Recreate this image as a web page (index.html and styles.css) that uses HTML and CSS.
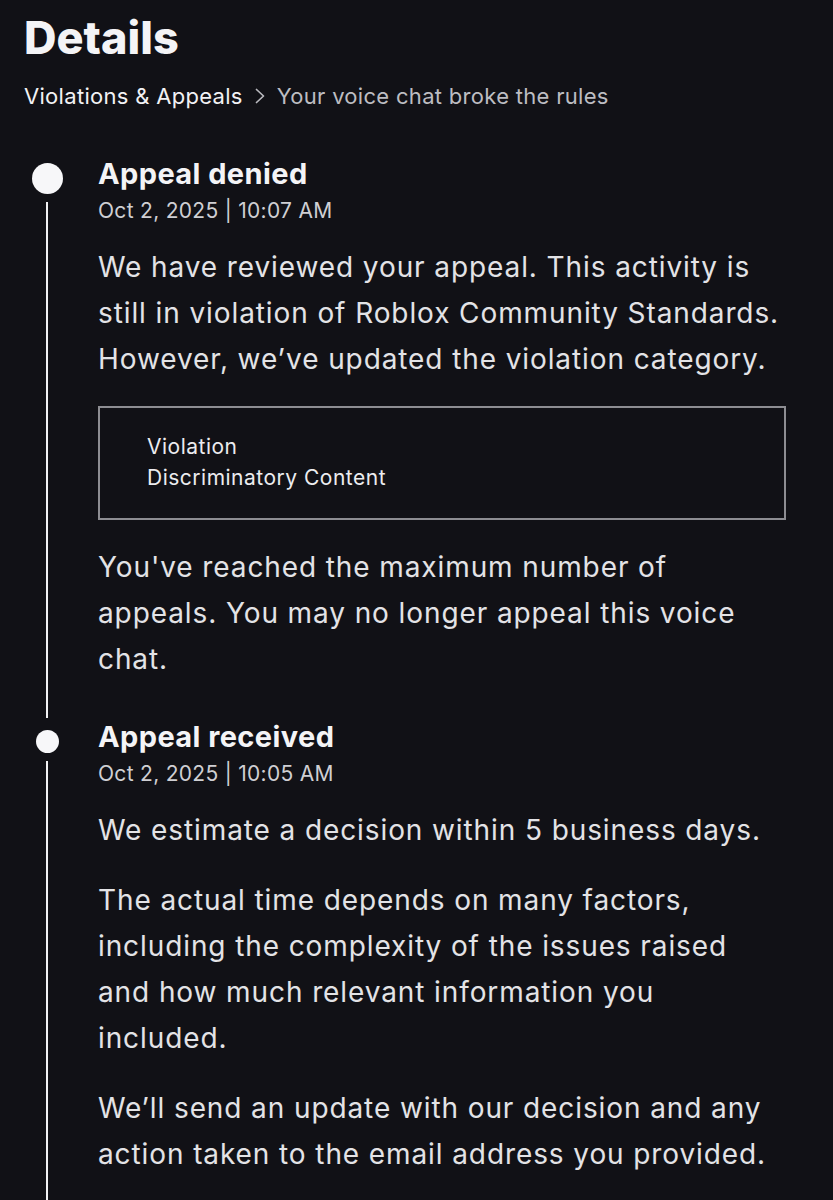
FILE: index.html
```html
<!DOCTYPE html>
<html lang="en">
<head>
<meta charset="utf-8">
<title>Details</title>
<link rel="stylesheet" href="styles.css">
</head>
<body>
<main class="page">
  <header class="header">
    <h1 class="title">Details</h1>
    <nav class="crumbs">
      <span class="crumb-link">Violations &amp; Appeals</span>
      <svg class="chev" width="14" height="18" viewBox="0 0 14 18" aria-hidden="true"><path d="M3.5 2.5 L10.5 9 L3.5 15.5" fill="none" stroke="#b9b9be" stroke-width="1.7" stroke-linecap="round" stroke-linejoin="round"/></svg>
      <span class="crumb-current">Your voice chat broke the rules</span>
    </nav>
  </header>

  <section class="timeline">
    <article class="event event-first">
      <div class="rail">
        <span class="dot dot-big"></span>
        <span class="line line-first"></span>
      </div>
      <div class="content">
        <h2 class="event-title">Appeal denied</h2>
        <div class="event-date">Oct 2, 2025 | 10:07 AM</div>
        <p class="body">We have reviewed your appeal. This activity is still in violation of Roblox Community Standards. However, we’ve updated the violation category.</p>
        <div class="box">
          <div class="box-label">Violation</div>
          <div class="box-value">Discriminatory Content</div>
        </div>
        <p class="body">You've reached the maximum number of appeals. You may no longer appeal this voice chat.</p>
      </div>
    </article>

    <article class="event event-second">
      <div class="rail">
        <span class="dot dot-small"></span>
        <span class="line line-second"></span>
      </div>
      <div class="content">
        <h2 class="event-title">Appeal received</h2>
        <div class="event-date">Oct 2, 2025 | 10:05 AM</div>
        <p class="body">We estimate a decision within 5 business days.</p>
        <p class="body">The actual time depends on many factors, including the complexity of the issues raised and how much relevant information you included.</p>
        <p class="body">We’ll send an update with our decision and any action taken to the email address you provided.</p>
      </div>
    </article>
  </section>
</main>
</body>
</html>
```

FILE: styles.css
```css
html, body {
  margin: 0;
  padding: 0;
  background: #111116;
}
body {
  font-family: "Inter", "Open Sans", sans-serif;
  color: #e6e6e9;
  height: 1200px;
  overflow: hidden;
}
.page {
  padding: 12px 0 0 24px;
}
.header {
  display: flex;
  flex-direction: column;
}
.title {
  margin: 0;
  font-size: 45px;
  line-height: 52px;
  font-weight: 800;
  color: #f4f4f6;
  letter-spacing: 0;
}
.crumbs {
  display: flex;
  align-items: center;
  gap: 10px;
  margin-top: 18px;
  font-size: 22px;
  line-height: 28px;
  letter-spacing: 0.3px;
}
.crumb-link { color: #f2f2f4; }
.crumb-current { color: #bdbdc2; }
.chev { margin: 0 0 0 0; }

.timeline {
  margin-top: 46px;
  display: flex;
  flex-direction: column;
}
.event {
  display: grid;
  grid-template-columns: 46px 688px;
  column-gap: 28px;
}
.rail {
  display: flex;
  flex-direction: column;
  align-items: center;
}
.dot {
  display: block;
  border-radius: 50%;
  background: #f7f7f9;
  flex: none;
}
.dot-big { width: 31px; height: 31px; margin-top: 7px; }
.dot-small { width: 23px; height: 23px; margin-top: 11px; }
.line {
  display: block;
  width: 2px;
  background: #f2f2f4;
  flex: 1;
}
.line-first { margin-top: 8px; margin-bottom: 1px; }
.line-second { margin-top: 8px; }

.content { padding-bottom: 37px; }
.event-second .content { padding-bottom: 80px; }

.event-title {
  margin: 0;
  font-size: 29px;
  line-height: 36px;
  font-weight: 700;
  color: #f4f4f6;
  letter-spacing: 0.4px;
}
.event-date {
  font-size: 21px;
  line-height: 28px;
  color: #cfcfd3;
  margin-top: 5px;
  letter-spacing: 0.3px;
}
.body {
  margin: 19px 0 0 0;
  font-size: 28px;
  line-height: 46px;
  color: #e3e3e6;
  letter-spacing: 0.9px;
}
.body + .body { margin-top: 24px; }
.box {
  margin-top: 24px;
  border: 2px solid #8d8d92;
  padding: 23px 48px 25px 47px;
  font-size: 21px;
  line-height: 31px;
  color: #ececef;
  letter-spacing: 0.5px;
}
.box + .body { margin-top: 24px; }
```
